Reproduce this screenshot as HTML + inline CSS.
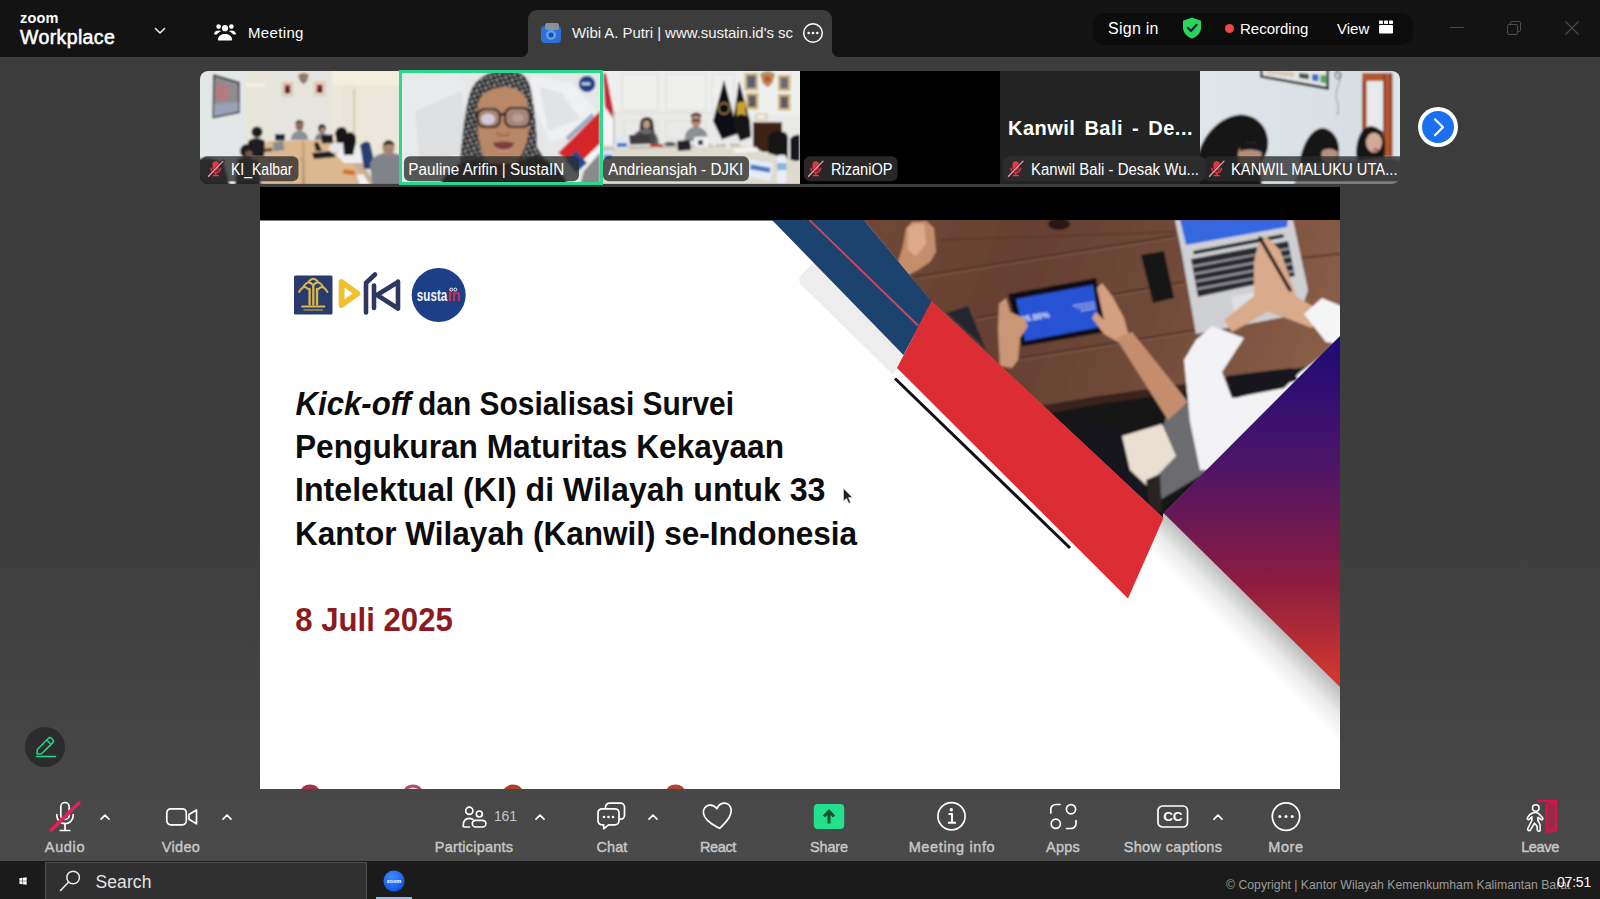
<!DOCTYPE html>
<html lang="id">
<head>
<meta charset="utf-8">
<title>Zoom Workplace - Meeting</title>
<style>
*{box-sizing:border-box;margin:0;padding:0}
html,body{width:1600px;height:899px;overflow:hidden;background:linear-gradient(to bottom,#3c3c3c 0,#3c3c3c 57px,#3d3d3d 520px,#4a4a4a 862px);font-family:"Liberation Sans",sans-serif;color:#fff}
.abs{position:absolute}
#top{left:0;top:0;width:1600px;height:57px;background:#131313}
#tab{left:528px;top:10px;width:304px;height:47px;background:#3c3c3c;border-radius:9px 9px 0 0}
#tab:before,#tab:after{content:"";position:absolute;bottom:0;width:7px;height:7px}
#tab:before{left:-7px;background:radial-gradient(circle at 0 0,transparent 6.500px,#3c3c3c 7.500px)}
#tab:after{right:-7px;background:radial-gradient(circle at 100% 0,transparent 6.500px,#3c3c3c 7.500px)}
#pill{left:1093px;top:13px;width:320px;height:32px;background:#0c0c0c;border-radius:12px}
.t{position:absolute;white-space:nowrap;line-height:1}
#strip{left:200px;top:71px;width:1200px;height:112.500px;border-radius:8px;overflow:hidden;background:#000}
.th{position:absolute;top:0;width:200px;height:112px;overflow:hidden}
.lbl{position:absolute;left:4px;bottom:2px;height:23px;background:rgba(40,40,40,.72);border-radius:6px;font-size:15px;line-height:23px;padding:0 5px 0 4px;white-space:nowrap;color:#fff}
#share{left:260px;top:187px;width:1080px;height:602px;background:#000;overflow:hidden}
#tool{left:0;top:790px;width:1600px;height:71px}
.tb{position:absolute;top:0;height:72px;text-align:center;font-size:14.5px;color:#d9d9d9}
.tb span{position:absolute;left:50%;transform:translateX(-50%);top:49.500px;white-space:nowrap;line-height:1;color:#c8c8c8;-webkit-text-stroke:.4px #c8c8c8}
#task{left:0;top:861px;width:1600px;height:38px;background:#1b1b1b}
#search{left:45px;top:1px;width:322px;height:37px;background:#303030;border:1px solid #505050;border-bottom:0}
</style>
</head>
<body>
<!-- TOP BAR -->
<div id="top" class="abs">
  <div class="t" style="left:20px;top:11px;font-size:14.500px;font-weight:bold;letter-spacing:.2px">zoom</div>
  <div class="t" style="left:20px;top:27.500px;font-size:19.500px;-webkit-text-stroke:.55px #fff;letter-spacing:.38px">Workplace</div>
  <svg class="abs" style="left:153px;top:25px" width="14" height="12" viewBox="0 0 14 12"><path d="M2.5 3.5 L7 8 L11.5 3.5" fill="none" stroke="#e8e8e8" stroke-width="1.6" stroke-linecap="round" stroke-linejoin="round"/></svg>
  <svg class="abs" style="left:214px;top:22px" width="22" height="20" viewBox="0 0 22 20"><g fill="#fff"><circle cx="11" cy="6.2" r="3.1"/><circle cx="4.6" cy="4.6" r="2.3"/><circle cx="17.4" cy="4.6" r="2.3"/><path d="M5.2 18.5c-.9 0-1.5-.7-1.3-1.6.6-3 3.4-5 7.1-5s6.500 2 7.100 5c.2.900-.4 1.600-1.300 1.600z"/><path d="M.8 12.600c-.5 0-.9-.5-.7-1 .6-1.900 2.300-3.100 4.500-3.100 1 0 1.900.2 2.600.7-2.100.7-3.600 1.900-4.400 3.400zM21.200 12.600c.5 0 .9-.5.7-1-.6-1.900-2.300-3.100-4.500-3.100-1 0-1.900.2-2.600.7 2.100.7 3.600 1.900 4.400 3.400z"/></g></svg>
  <div class="t" style="left:248px;top:25px;font-size:15px;letter-spacing:.35px">Meeting</div>
  <div id="tab" class="abs"></div>
  <svg class="abs" style="left:539px;top:21px" width="24" height="24" viewBox="0 0 24 24"><rect x="2" y="5" width="20" height="17" rx="4" fill="#2f6fd6"/><rect x="6" y="2" width="14" height="7" rx="2" fill="#8a8f9a"/><circle cx="12" cy="14" r="5" fill="#5aa0f0"/><circle cx="12" cy="14" r="2.500" fill="#1d4fa8"/></svg>
  <div class="t" style="left:572px;top:25px;font-size:15px;letter-spacing:-.05px;color:#f2f2f2">Wibi A. Putri | www.sustain.id's sc</div>
  <svg class="abs" style="left:802px;top:22px" width="22" height="22" viewBox="0 0 22 22"><circle cx="11" cy="11" r="9.300" fill="none" stroke="#fff" stroke-width="1.500"/><circle cx="6.700" cy="11" r="1.300" fill="#fff"/><circle cx="11" cy="11" r="1.300" fill="#fff"/><circle cx="15.300" cy="11" r="1.300" fill="#fff"/></svg>
  <div id="pill" class="abs"></div>
  <div class="t" style="left:1108px;top:21px;font-size:16px;letter-spacing:.25px">Sign in</div>
  <svg class="abs" style="left:1181px;top:16px" width="22" height="24" viewBox="0 0 22 24"><path d="M11 1.500 L20 4.800 V11.500 C20 16.800 16.300 20.800 11 22.600 C5.700 20.800 2 16.800 2 11.500 V4.800 Z" fill="#2bd45b"/><path d="M6.800 11.800 L10 15 L15.600 8.800" fill="none" stroke="#123" stroke-width="2.200" stroke-linecap="round" stroke-linejoin="round"/></svg>
  <div class="abs" style="left:1225px;top:24px;width:9px;height:9px;border-radius:50%;background:#f0464b"></div>
  <div class="t" style="left:1240px;top:21px;font-size:15px">Recording</div>
  <div class="t" style="left:1337px;top:21px;font-size:15px">View</div>
  <svg class="abs" style="left:1378px;top:20px" width="16" height="14" viewBox="0 0 16 14"><g fill="#fff"><rect x="1" y="0.500" width="4" height="3.500" rx=".8"/><rect x="6" y="0.500" width="4" height="3.500" rx=".8"/><rect x="11" y="0.500" width="4" height="3.500" rx=".8"/><rect x="1" y="5" width="14" height="8.500" rx="1"/></g></svg>
  <div class="abs" style="left:1450px;top:27px;width:14px;height:1px;background:#4c4c4c"></div>
  <svg class="abs" style="left:1506px;top:20px" width="16" height="16" viewBox="0 0 16 16"><rect x="1.500" y="4.500" width="10" height="10" rx="1.500" fill="none" stroke="#4c4c4c" stroke-width="1"/><path d="M4.500 4.500 V3 a1.500 1.500 0 0 1 1.500 -1.500 H13 a1.500 1.500 0 0 1 1.500 1.500 V10 a1.500 1.500 0 0 1 -1.500 1.500 H11.500" fill="none" stroke="#4c4c4c" stroke-width="1"/></svg>
  <svg class="abs" style="left:1564px;top:20px" width="16" height="16" viewBox="0 0 16 16"><path d="M1.500 1.500 L14.500 14.500 M14.500 1.500 L1.500 14.500" stroke="#4c4c4c" stroke-width="1.200"/></svg>
</div>

<!-- THUMBNAIL STRIP -->
<div id="strip" class="abs">
<svg class="abs" style="left:0;top:0" width="1200" height="112.500" viewBox="0 0 1200 112.500" font-family="Liberation Sans, sans-serif">
  <defs>
    <filter id="t1" x="-5%" y="-5%" width="110%" height="110%"><feGaussianBlur stdDeviation="0.8"/></filter>
    <filter id="t2" x="-10%" y="-10%" width="120%" height="120%"><feGaussianBlur stdDeviation="1.600"/></filter>
    <linearGradient id="w1" x1="0" y1="0" x2="1" y2="0"><stop offset="0" stop-color="#e3e5e4"/><stop offset=".45" stop-color="#ebe9e2"/><stop offset="1" stop-color="#f1e7d0"/></linearGradient>
    <linearGradient id="w3" x1="0" y1="0" x2="0" y2="1"><stop offset="0" stop-color="#e4e2de"/><stop offset="1" stop-color="#d2cfc9"/></linearGradient>
    <linearGradient id="w6" x1="0" y1="0" x2="1" y2="0"><stop offset="0" stop-color="#e0e6ea"/><stop offset="1" stop-color="#d6dde2"/></linearGradient>
    <pattern id="hij" width="7" height="6" patternUnits="userSpaceOnUse" patternTransform="rotate(24)"><rect width="7" height="6" fill="#1c1c1e"/><rect x=".5" y=".5" width="2.600" height="1.600" fill="#e4e4e4"/><rect x="4" y="3.300" width="2.400" height="1.500" fill="#cfcfcf"/><rect x="1" y="3.800" width="1.300" height="1.200" fill="#9a9a9a"/></pattern>
    <clipPath id="c1"><rect x="0" y="0" width="200" height="113"/></clipPath>
    <clipPath id="c2"><rect x="200" y="0" width="200" height="113"/></clipPath>
    <clipPath id="c3"><rect x="400" y="0" width="200" height="113"/></clipPath>
    <clipPath id="c6"><rect x="1000" y="0" width="200" height="113"/></clipPath>
    
  </defs>

  <!-- THUMB 1 : KI_Kalbar -->
  <g clip-path="url(#c1)"><g filter="url(#t1)">
    <rect x="-2" y="-2" width="204" height="116" fill="#e7e6e1"/>
    <rect x="-2" y="-2" width="48" height="90" fill="#e4e7e8"/>
    <rect x="45" y="-2" width="29" height="80" fill="#e8e5db"/><rect x="45" y="12" width="20" height="4" fill="#f2eee2"/>
    <rect x="74" y="-2" width="58" height="76" fill="#e5e4df"/>
    <rect x="132" y="-2" width="70" height="90" fill="#ece7da"/><rect x="132" y="-2" width="70" height="16" fill="#f3eddd"/>
    <rect x="142" y="14" width="14" height="70" fill="#e9e4d8"/><rect x="153.500" y="18" width="1.500" height="60" fill="#c9c0a8"/>
    <polygon points="13,3 40,11 40,42 12.500,47.500" fill="#26262a"/><polygon points="14.500,5.500 38.500,12.500 38.500,40.500 14,45.500" fill="#8e8c8e"/><polygon points="16,12 28,15 28,29 16,29" fill="#b87880"/><polygon points="14.200,33 38.500,31 38.500,40.500 14,45.500" fill="#98a2b8"/>
    <rect x="82" y="11" width="11" height="14.500" fill="#d4c4a0"/><rect x="83.500" y="12.500" width="8" height="11.500" fill="#f0eee8"/><rect x="84.500" y="13.500" width="6" height="9" fill="#c03844"/><rect x="85.500" y="16" width="4" height="6.500" fill="#2c2c34"/>
    <rect x="114" y="10.500" width="11.500" height="14.500" fill="#d4c4a0"/><rect x="115.500" y="12" width="8.500" height="11.500" fill="#f0eee8"/><rect x="116.500" y="13" width="6.500" height="9" fill="#c03844"/><rect x="117.800" y="15.500" width="4" height="6.500" fill="#2c2c34"/>
    <path d="M98 4 q5.500 -4 11 0 l-2 6 l-3.500 3.500 l-3.500 -3.500 z" fill="#8a7c68"/>
    <!-- table -->
    <polygon points="68,70 138,69 166,114 52,114 56,86" fill="#dcb890"/>
    <polygon points="102.500,70 104,70 105,114 102,114" fill="#b89468"/>
    <polygon points="66,88 104,87 104,89 66,90" fill="#c4a078"/>
    <polygon points="138,69 150,72 176,114 166,114" fill="#c8b094"/>
    <!-- center back -->
    <rect x="75" y="63" width="10" height="6.500" rx="1" fill="#1e2440"/>
    <ellipse cx="99.500" cy="55" rx="4" ry="5" fill="#8c6a58"/><path d="M95.500 53 q4 -5 8 0 v-2 q-4 -4 -8 0z" fill="#2a2220"/><path d="M90.500 69 q1 -9 9 -9.500 q8 .5 9 9.500z" fill="#8c9096"/>
    <ellipse cx="122" cy="57.500" rx="3.800" ry="4.500" fill="#2c2222"/><ellipse cx="122.500" cy="59" rx="2.300" ry="2.800" fill="#b08a78"/><path d="M114.500 69 q1 -7 7.500 -7.500 q6.500 .5 7.500 7.500z" fill="#7e8288"/>
    <!-- laptops -->
    <polygon points="73,72 83,70 84.500,79 74,80.500" fill="#8a8a90"/><polygon points="121,64 133,63.500 133,72 122,72.500" fill="#1c1c20"/>
    <polygon points="114,72 118,71 122,80 116,80" fill="#1a1a1e"/><polygon points="112,82 132,80 136,86 114,88" fill="#1e1e22"/>
    <polygon points="62,78 72,77 73,80 63,81" fill="#5a3a2c"/>
    <!-- left persons -->
    <ellipse cx="57" cy="61" rx="5.500" ry="5.500" fill="#1a1a1e"/><path d="M48 70 q8 -6 17 0 l-1 16 h-15 z" fill="#1c1c22"/>
    <ellipse cx="47" cy="80" rx="7" ry="7" fill="#1a1a1e"/><ellipse cx="49" cy="83" rx="3.500" ry="3.500" fill="#7a5a4a"/><path d="M37 88 q10 -5 22 2 l2 24 h-26 z" fill="#26262c"/>
    <path d="M-2 88 q12 -4 26 4 l6 22 h-32 z" fill="#2a2a2e"/>
    <!-- right persons -->
    <path d="M128 78 q4 -8 14 -8 l6 8 l-16 4 z" fill="#e6e8ec"/><path d="M135 62 q2 -7 8 -6 q5 2 4 8 l-2 8 h-8 z" fill="#151518"/>
    <path d="M136 84 q6 -12 18 -12 q8 2 8 10 l2 10 h-20 z" fill="#eeeef0"/><path d="M143 70 q1 -9 8 -9 q6 2 5 10 l-3 13 h-9 z" fill="#131316"/>
    <path d="M160 74 q6 -6 10 -2 l6 26 h-12 z" fill="#2a3c70"/>
    <path d="M170 92 q6 -12 22 -10 l10 2 v30 h-30 z" fill="#80848a"/><ellipse cx="188.500" cy="77" rx="6" ry="7" fill="#a88470"/><path d="M182.500 75 q2 -7 8 -5.500 q4 1.500 4 5 q-5 -3 -12 .5z" fill="#1e1a18"/>
    <rect x="143" y="99" width="12" height="4.500" fill="#d8702c" transform="rotate(8 149 101)"/>
    <polygon points="157,104 163,103 170,114 160,114" fill="#f2f2f2"/>
  </g></g>

  <!-- THUMB 2 : Pauline -->
  <g clip-path="url(#c2)"><g filter="url(#t1)">
    <rect x="198" y="-2" width="204" height="116" fill="#e6e7e8"/>
    <polygon points="200,10 260,2 272,40 262,90 200,100" fill="#e9eaeb"/>
    <polygon points="215,40 262,20 266,80 220,96" fill="#dfe0e2"/>
    <polygon points="330,4 372,12 400,44 400,60 350,70 336,40" fill="#eff0f1"/>
    <polygon points="340,16 362,22 380,48 348,60" fill="#e2e3e6"/>
    <polygon points="358,82 400,40 400,73 376,96" fill="#d4262c"/>
    <polygon points="366,66 392,42 394,46 368,70" fill="#9aa8c4"/>
    <polygon points="376,96 400,73 400,80 382,100" fill="#f4f4f4"/>
    <polygon points="384,100 400,82 400,114 380,114" fill="#8a8a8c"/>
    <polygon points="366,90 376,80 387,92 376,102" fill="#1f4a8c"/>
    <circle cx="387" cy="13" r="8.300" fill="#1d3f88"/><rect x="382" y="11.500" width="8" height="2.500" fill="#d0d8ec"/>
    <!-- hijab -->
    <path d="M270 22 C276 4 294 -1 308 -1 C322 -1 330 8 331 20 C335 40 337 62 337 76 L346 90 L352 114 L256 114 L260 90 C262 70 264 40 270 22 Z" fill="url(#hij)"/>
    <!-- face -->
    <path d="M278 34 C280 20 296 15 308 16 C322 17 328 28 329 40 C331 60 326 80 316 92 L288 92 C278 80 276 54 278 34 Z" fill="#b88868"/>
    <path d="M296 60 q8 6 14 0 l-1 6 h-12 z" fill="#a67656"/>
    <path d="M293 72 q10 -3 21 0 q-2 7 -11 7 q-8 0 -10 -7z" fill="#7c3c3a"/><path d="M295 76 q9 5 18 0 q-2 5 -9 5 q-6 0 -9 -5z" fill="#c88c88"/>
    <g fill="#a08478" fill-opacity=".75" stroke="#2a2022" stroke-width="2.200"><rect x="277.500" y="38" width="22.500" height="18" rx="7"/><rect x="305" y="37" width="25" height="19" rx="7"/><path d="M300 44 q2.500 -2 5 0" fill="none"/></g>
    <ellipse cx="288" cy="48" rx="7" ry="5.500" fill="#dcd8f0" opacity=".85"/><ellipse cx="318" cy="47" rx="6" ry="4.500" fill="#c8b8b8" opacity=".5"/>
    <!-- body -->
    <path d="M240 114 q8 -22 34 -26 l14 4 h28 l22 -6 q22 6 30 28 z" fill="#141416"/>
  </g></g>

  <!-- THUMB 3 : Andrieansjah -->
  <g clip-path="url(#c3)"><g filter="url(#t1)">
    <rect x="398" y="-2" width="204" height="116" fill="#efefed"/>
    <rect x="398" y="44" width="204" height="34" fill="#e9e9e7"/>
    <g fill="none" stroke="#dcdcd8" stroke-width="1"><rect x="422" y="3" width="36" height="36"/><rect x="466" y="3" width="40" height="36"/><rect x="424" y="50" width="34" height="20"/><rect x="466" y="50" width="40" height="18"/><rect x="512" y="3" width="22" height="36"/></g>
    <rect x="398" y="41" width="150" height="2.500" fill="#e0e0dc"/>
    <path d="M403 3 L406 2 L413.500 40 L413 47 L405 36 Z" fill="#c42c38"/><path d="M403 36 L413 48 L414 72 L403 74 Z" fill="#f4f4f4"/><rect x="413" y="40" width="2" height="34" fill="#c8c8c4"/>
    <!-- portraits -->
    <rect x="544.500" y="2" width="13.500" height="17.500" fill="#cdb47c"/><rect x="547" y="4.500" width="8.500" height="12.500" fill="#5a6278"/>
    <rect x="578" y="4" width="12.500" height="16" fill="#cdb47c"/><rect x="580.500" y="6.500" width="7.500" height="11" fill="#6a6a74"/>
    <rect x="546" y="22" width="12.500" height="16.500" fill="#cdb47c"/><rect x="548.500" y="24.500" width="7.500" height="11.500" fill="#5c5c66"/>
    <rect x="578" y="23" width="12.500" height="16.500" fill="#cdb47c"/><rect x="580.500" y="25.500" width="7.500" height="11.500" fill="#5c5c66"/>
    <path d="M560 3 q7.500 -6 15 0 l-2.500 9 l-5 4.500 l-5 -4.500 z" fill="#b8925a"/><rect x="564.500" y="5" width="6" height="6" fill="#c8483c"/>
    <rect x="555" y="42" width="12.500" height="7.500" fill="#d8ceb0"/><rect x="557" y="43.500" width="8.500" height="4.500" fill="#f0ece0"/>
    <!-- black flags -->
    <path d="M524 9 L535 50 L540 62 L522 68.500 L513 50 Z" fill="#111113"/>
    <path d="M539 10 L550 50 L551 66 L540 70 L533 52 Z" fill="#131315"/>
    <circle cx="524" cy="37.500" r="5.500" fill="none" stroke="#a88838" stroke-width="1.300"/><path d="M537 32 q6 -3 10 1 l-2 6 l2 6 l-6 -2 l-4 2 z" fill="#c8a030"/>
    <!-- podium & chairs -->
    <rect x="553" y="51" width="29" height="30" fill="#3e2218"/><rect x="553" y="51" width="29" height="2" fill="#5a3424"/>
    <path d="M568 66 q2 -6 10 -6 q9 0 10 6 v22 h-20 z" fill="#161618"/><path d="M590 68 q4 -5 10 -4 v26 h-10 z" fill="#18181a"/>
    <!-- table -->
    <polygon points="398,78 540,74 602,92 602,114 398,114" fill="#dedacd"/>
    <polygon points="398,76 540,72.500 540,75 398,79" fill="#c4beb0"/>
    <!-- woman -->
    <path d="M440 52 q1 -6 7 -6 q6 0 6.500 7 l1 8 h-15 z" fill="#3a3838"/><ellipse cx="446.500" cy="53.500" rx="3.300" ry="4" fill="#c09a84"/>
    <path d="M431 73 q1 -14 15 -15 q12 1 13 15z" fill="#6c6c70"/><path d="M438 60 q8 6 16 0 l2 13 h-19 z" fill="#4a4848"/>
    <polygon points="429,64 449,63.500 450,73 430,73.500" fill="#3a3a40"/>
    <!-- man -->
    <ellipse cx="496" cy="50" rx="5" ry="6.500" fill="#b48a70"/><path d="M491 47 q5 -6 10 0 l.300 -3 q-5 -5 -10.500 0z" fill="#2a2422"/><rect x="492" y="48.500" width="8" height="2" fill="#3a3030"/>
    <path d="M484.500 70 q0 -13 11.500 -14.500 q12 1.500 12 14.500z" fill="#8c8e94"/>
    <polygon points="494,66 508,65.500 508.500,76 494.500,76" fill="#eceef2"/><rect x="498" y="69" width="5" height="5" fill="#3a3a44"/>
    <polygon points="477,70 490,69 491,79 478,80" fill="#24242a"/><ellipse cx="470" cy="73" rx="6" ry="2.200" fill="#5a5a5c"/>
    <!-- items -->
    <rect x="415" y="66" width="13" height="12" fill="#dfe8f4"/><rect x="417" y="72" width="10" height="4" fill="#4a78c8"/>
    <rect x="450" y="73" width="13" height="3" fill="#c03c30"/>
    <rect x="403" y="79" width="10" height="13" fill="#d4e0f0"/><rect x="404" y="84" width="8" height="4" fill="#4a78c8"/>
    <rect x="548" y="90" width="24" height="18" fill="#e6ecf6" transform="rotate(10 560 99)"/><rect x="550" y="95" width="20" height="5" fill="#4878c4" transform="rotate(10 560 99)"/>
    <rect x="577" y="84" width="9.500" height="28" rx="3" fill="#e8eef4"/><rect x="577" y="92" width="9.500" height="7" fill="#8cb4dc"/>
    <rect x="512" y="65" width="4" height="10" rx="1.500" fill="#e4eaf0"/><rect x="526" y="68" width="4" height="10" rx="1.500" fill="#e4eaf0"/>
    <polygon points="532,78 556,76 560,80 536,82" fill="#f4f4f4"/>
  </g></g>

  <!-- THUMB 4 -->
  <rect x="600" y="0" width="200" height="113" fill="#000"/>
  <!-- THUMB 5 -->
  <rect x="800" y="0" width="200" height="113" fill="#232323"/>
  <text x="808" y="63.500" font-size="20" font-weight="bold" fill="#fff" word-spacing="3" textLength="184.500" lengthAdjust="spacing">Kanwil Bali - De...</text>

  <!-- THUMB 6 : Maluku -->
  <g clip-path="url(#c6)"><g filter="url(#t1)">
    <rect x="998" y="-2" width="204" height="116" fill="url(#w6)"/>
    <polygon points="1060,-2 1129,-2 1129,19 1060,6.500" fill="#1a1a1c"/><polygon points="1062.500,-2 1126.500,-2 1126.500,15.800 1062.500,4.500" fill="#e6e8e6"/>
    <polygon points="1099,2 1109,3 1109,8.500 1099,7" fill="#3a5a44"/><polygon points="1112,3 1118.500,3.500 1118.500,10.500 1112,9.500" fill="#3a6ac4"/><polygon points="1120.500,4 1126.500,4.500 1126.500,12.500 1120.500,11.500" fill="#58a058"/><polygon points="1066,-1 1094,1 1094,6 1066,3" fill="#d8c8b8"/>
    <path d="M1136 0 q6 6 3 12 q-5 10 -1 22 q1 6 -1 10" fill="none" stroke="#9a9ea4" stroke-width="1.200"/><ellipse cx="1138" cy="4" rx="3" ry="4" fill="none" stroke="#4a4a50" stroke-width="1"/>
    <!-- door -->
    <rect x="1162" y="2" width="31" height="86" fill="#e6eaec"/>
    <rect x="1162" y="2" width="4.500" height="58" fill="#9c4824"/><rect x="1162" y="2" width="24" height="8" fill="#b4562a"/><rect x="1183" y="2" width="9.500" height="84" fill="#9a4422"/><rect x="1186" y="2" width="3" height="84" fill="#b85a30"/>
    <rect x="1193" y="-2" width="9" height="116" fill="#dfe5ea"/>
    <!-- people -->
    <path d="M998 84 C1004 62 1020 46 1040 43.500 C1056 44 1066 54 1068 68 C1069 78 1066 86 1060 92 L1062 114 L998 114 Z" fill="#121214"/>
    <path d="M1040 76 C1048 68 1060 70 1062 80 C1062 90 1056 98 1046 98 C1038 94 1036 84 1040 76 Z" fill="#b48e7a"/>
    <path d="M1040 74 q10 -6 22 0 q2 4 1 8 q-10 -6 -23 -2z" fill="#19191b"/>
    <path d="M1100 88 C1104 70 1112 58 1122 57 C1134 58 1140 70 1139 82 L1138 92 L1100 94 Z" fill="#151517"/>
    <path d="M1122 80 q8 -5 16 1 q0 8 -6 11 h-8 q-4 -6 -2 -12z" fill="#b8927e"/>
    <path d="M1156 84 C1156 66 1162 56 1171 55 C1180 56 1185 64 1185 76 L1184 88 L1158 90 Z" fill="#131315"/>
    <ellipse cx="1174" cy="71.500" rx="8" ry="10" fill="#d4aa98"/><ellipse cx="1175.500" cy="78.500" rx="2.800" ry="1.300" fill="#a84c50"/><path d="M1165 66 q8 -8 17 -1 l1 -4 q-9 -8 -18 0z" fill="#131315"/>
    <path d="M1094 114 q4 -20 26 -22 q20 -4 40 -2 q24 -6 42 0 v26 z" fill="#7e7e80"/>
  </g></g>

  <!-- LABELS -->
  <g font-size="15.600" fill="#fff">
    <rect x="1" y="85.300" width="97.500" height="25" rx="6" fill="#2b2b2b" opacity=".78"/>
    <g transform="translate(7.500 89.300)">
      <path d="M1 16 L15.500 0.800" stroke="#2a2a2a" stroke-width="3.400" stroke-linecap="round"/>
      <g fill="#e2364e" stroke="none"><rect x="5" y="1" width="6.400" height="9.500" rx="3.200"/><path d="M2.600 7.500 h1.500 a4.100 4.100 0 0 0 8.200 0 h1.500 a5.600 5.600 0 0 1 -4.800 5.500 v1.500 h2.300 v1.500 h-6.200 v-1.500 h2.300 v-1.500 a5.600 5.600 0 0 1 -4.800 -5.500z"/></g>
      <path d="M1 16 L15.500 0.800" stroke="#2a2a2a" stroke-width="2.600" stroke-linecap="round" opacity=".55"/>
      <path d="M1 16 L15.500 0.800" stroke="#f49aa6" stroke-width="1.300" stroke-linecap="round"/>
    </g>
    <text x="31" y="103.500" textLength="61.500" lengthAdjust="spacingAndGlyphs">KI_Kalbar</text>
    <rect x="204" y="85.300" width="175" height="25" rx="6" fill="#2b2b2b" opacity=".78"/>
    <text x="208.300" y="103.500" textLength="156" lengthAdjust="spacingAndGlyphs">Pauline Arifin | SustaIN</text>
    <rect x="403" y="85.300" width="146" height="25" rx="6" fill="#2b2b2b" opacity=".78"/>
    <text x="408.300" y="103.500" textLength="135" lengthAdjust="spacingAndGlyphs">Andrieansjah - DJKI</text>
    <rect x="604" y="85.300" width="93.500" height="25" rx="6" fill="#2b2b2b" opacity=".9"/>
    <g transform="translate(607.500 89.300)">
      <path d="M1 16 L15.500 0.800" stroke="#2a2a2a" stroke-width="3.400" stroke-linecap="round"/>
      <g fill="#e2364e" stroke="none"><rect x="5" y="1" width="6.400" height="9.500" rx="3.200"/><path d="M2.600 7.500 h1.500 a4.100 4.100 0 0 0 8.200 0 h1.500 a5.600 5.600 0 0 1 -4.800 5.500 v1.500 h2.300 v1.500 h-6.200 v-1.500 h2.300 v-1.500 a5.600 5.600 0 0 1 -4.800 -5.500z"/></g>
      <path d="M1 16 L15.500 0.800" stroke="#2a2a2a" stroke-width="2.600" stroke-linecap="round" opacity=".55"/>
      <path d="M1 16 L15.500 0.800" stroke="#f49aa6" stroke-width="1.300" stroke-linecap="round"/>
    </g>
    <text x="631" y="103.500" textLength="61.500" lengthAdjust="spacingAndGlyphs">RizaniOP</text>
    <rect x="803" y="85.300" width="203" height="25" rx="6" fill="#2d2d2d" opacity=".9"/>
    <g transform="translate(807.500 89.300)">
      <path d="M1 16 L15.500 0.800" stroke="#2a2a2a" stroke-width="3.400" stroke-linecap="round"/>
      <g fill="#e2364e" stroke="none"><rect x="5" y="1" width="6.400" height="9.500" rx="3.200"/><path d="M2.600 7.500 h1.500 a4.100 4.100 0 0 0 8.200 0 h1.500 a5.600 5.600 0 0 1 -4.800 5.500 v1.500 h2.300 v1.500 h-6.200 v-1.500 h2.300 v-1.500 a5.600 5.600 0 0 1 -4.800 -5.500z"/></g>
      <path d="M1 16 L15.500 0.800" stroke="#2a2a2a" stroke-width="2.600" stroke-linecap="round" opacity=".55"/>
      <path d="M1 16 L15.500 0.800" stroke="#f49aa6" stroke-width="1.300" stroke-linecap="round"/>
    </g>
    <text x="831" y="103.500" textLength="168" lengthAdjust="spacingAndGlyphs">Kanwil Bali - Desak Wu...</text>
    <rect x="1004" y="85.300" width="203" height="25" rx="6" fill="#2b2b2b" opacity=".78"/>
    <g transform="translate(1008.500 89.300)">
      <path d="M1 16 L15.500 0.800" stroke="#2a2a2a" stroke-width="3.400" stroke-linecap="round"/>
      <g fill="#e2364e" stroke="none"><rect x="5" y="1" width="6.400" height="9.500" rx="3.200"/><path d="M2.600 7.500 h1.500 a4.100 4.100 0 0 0 8.200 0 h1.500 a5.600 5.600 0 0 1 -4.800 5.500 v1.500 h2.300 v1.500 h-6.200 v-1.500 h2.300 v-1.500 a5.600 5.600 0 0 1 -4.800 -5.500z"/></g>
      <path d="M1 16 L15.500 0.800" stroke="#2a2a2a" stroke-width="2.600" stroke-linecap="round" opacity=".55"/>
      <path d="M1 16 L15.500 0.800" stroke="#f49aa6" stroke-width="1.300" stroke-linecap="round"/>
    </g>
    <text x="1031" y="103.500" textLength="166.500" lengthAdjust="spacingAndGlyphs">KANWIL MALUKU UTA...</text>
  </g>
</svg>
</div>

<div class="abs" style="left:398.500px;top:70px;width:204px;height:115px;border:3px solid #2bd88d"></div>

<!-- SHARED SCREEN -->
<div id="share" class="abs">
<svg class="abs" style="left:0;top:0" width="1080" height="602" viewBox="260 187 1080 602" font-family="Liberation Sans, sans-serif">
  <defs>
    <linearGradient id="pg" x1="0" y1="0" x2="0" y2="1"><stop offset="0" stop-color="#1c0a78"/><stop offset=".35" stop-color="#4a1468"/><stop offset=".7" stop-color="#8c1c40"/><stop offset="1" stop-color="#d63a2c"/></linearGradient>
    <linearGradient id="wood" x1="0" y1="0" x2="1" y2=".25"><stop offset="0" stop-color="#704836"/><stop offset=".35" stop-color="#664032"/><stop offset=".6" stop-color="#6e4838"/><stop offset="1" stop-color="#8a5e48"/></linearGradient>
    <linearGradient id="shg" gradientUnits="userSpaceOnUse" x1="1250" y1="598" x2="1222" y2="626"><stop offset="0" stop-color="#000" stop-opacity=".26"/><stop offset=".5" stop-color="#000" stop-opacity=".08"/><stop offset="1" stop-color="#000" stop-opacity="0"/></linearGradient>
    <filter id="b1" x="-5%" y="-5%" width="110%" height="110%"><feGaussianBlur stdDeviation="0.9"/></filter>
    <filter id="b2" x="-20%" y="-20%" width="140%" height="140%"><feGaussianBlur stdDeviation="2"/></filter>
    <filter id="b8" x="-30%" y="-30%" width="160%" height="160%"><feGaussianBlur stdDeviation="9"/></filter>
    <clipPath id="pc"><polygon points="864,220 1341,220 1341,336 1163,514 1163,518 931,301"/></clipPath>
    <clipPath id="sc"><rect x="260" y="220" width="1080" height="569"/></clipPath>
  </defs>
  <rect x="260" y="187" width="1080" height="34" fill="#000"/>
  <rect x="260" y="220.500" width="1080" height="568.500" fill="#fff"/>
  <g clip-path="url(#sc)">
    <!-- soft shadows -->
    <polygon points="1163.500,511 1343,688 1343,752 1131,543" fill="url(#shg)"/>
    <path d="M814 262 L903.500 355 L897.500 368 L893 374.500 L801.500 285 Q797 280 801.500 275 Z" fill="#ededee"/>
    <!-- navy band -->
    <polygon points="772,220 864,220 932,301.500 903.500,355" fill="#1c426e"/>
    <line x1="809.500" y1="220" x2="918" y2="325.500" stroke="#d8425c" stroke-width="1.800"/>
    <!-- photo -->
    <g clip-path="url(#pc)">
      <g filter="url(#b1)">
        <rect x="860" y="215" width="490" height="310" fill="url(#wood)"/>
        <g stroke="#3e261c" stroke-width="1.300" opacity=".8">
          <line x1="914" y1="277" x2="1174" y2="236"/><line x1="976" y1="318" x2="1184" y2="282"/><line x1="1020" y1="358" x2="1196" y2="330"/><line x1="1300" y1="258" x2="1345" y2="253"/><line x1="940" y1="240" x2="1176" y2="232" opacity=".5"/>
        </g>
        <g stroke="#a07860" stroke-width="1" opacity=".5">
          <line x1="914" y1="279" x2="1174" y2="238"/><line x1="976" y1="320" x2="1184" y2="284"/><line x1="1020" y1="360" x2="1196" y2="332"/>
        </g>
        <!-- under-table dark -->
        <polygon points="1040,406 1100,396 1300,368 1345,360 1345,530 1100,530" fill="#141418"/>
        <polygon points="1040,406 1100,396 1230,378 1230,386 1100,404 1046,414" fill="#3a241a"/>
        <polygon points="1168,410 1200,400 1210,470 1160,500 1150,470" fill="#6c6c70"/>
        <!-- notebook left -->
        <polygon points="946,313 968,306 986,350 976,340" fill="#23262e"/>
        <!-- hand top-left -->
        <path d="M898 262 L903 246 L906 228 L912 222 L926 221 L934 228 L936 252 L930 262 L918 270 L906 276 Z" fill="#c48e6c"/>
        <path d="M908 228 L914 224 L924 224 L926 244 L916 256 L908 250 Z" fill="#dcaa8a"/>
        <ellipse cx="1059" cy="224" rx="11" ry="6" fill="#2a1812"/>
        <!-- tablet -->
        <polygon points="1008,294 1096,278 1106.500,332 1022,346.500" fill="#111115"/>
        <polygon points="1016,299 1093,285 1100,327 1025,341" fill="#2852d4"/>
        <text x="1021.500" y="322.500" font-size="8.500" font-weight="bold" fill="#e8eefc" transform="rotate(-10 1021 322)">85.00%</text>
        <g stroke="#c8d4f4" stroke-width="1" transform="rotate(-10 1084 306)"><line x1="1073" y1="304" x2="1095" y2="304"/><line x1="1076" y1="307" x2="1095" y2="307"/><line x1="1080" y1="310" x2="1095" y2="310"/></g>
        <!-- left arm / hand -->
        <path d="M999 304 L1006 298 L1010 312 L1024 318 L1028 326 L1020 338 L1018 360 L1012 368 L1000 366 L998 330 Z" fill="#c99676"/>
        <!-- right hand on tablet -->
        <path d="M1097 288 L1102 283 L1112 296 L1124 318 L1130 340 L1118 342 L1104 334 L1092 318 L1096 312 L1104 320 Z" fill="#d3a080"/>
        <!-- forearm -->
        <polygon points="1116,338 1132,332 1188,402 1168,420" fill="#c48e6e"/>
        <!-- phone -->
        <polygon points="1141,255 1164,251 1174,298 1153,303" fill="#141418"/>
        <!-- laptop -->
        <polygon points="1175,220 1293,220 1308,290 1300,314 1196,334 1182,254" fill="#cfd0d4"/>
        <polygon points="1180,220 1288,220 1287,227 1186,245" fill="#3468e0"/>
        <polygon points="1193,251 1283,234 1284,237.500 1194,254.500" fill="#1a1a1e"/>
        <polygon points="1191,259 1288,241 1295,276 1198,297" fill="#2c2c30"/>
        <g stroke="#b8b9be" stroke-width="1.300"><line x1="1192.500" y1="266.500" x2="1289.500" y2="248.500"/><line x1="1194" y1="274" x2="1291" y2="256"/><line x1="1195.500" y1="281.500" x2="1292.500" y2="263.500"/><line x1="1197" y1="289" x2="1294" y2="271"/></g>
        <polygon points="1231,297 1260,291 1264,308 1235,315" fill="#dfe0e3"/>
        <!-- hands w/ pen -->
        <path d="M1254 262 L1258 244 L1266 236 L1280 250 L1290 278 L1296 296 L1322 312 L1312 328 L1286 318 L1268 312 L1232 332 L1224 320 L1254 296 Z" fill="#d9aa8c"/>
        <line x1="1260" y1="238" x2="1290" y2="290" stroke="#1a1212" stroke-width="3.400" stroke-linecap="round"/>
        <!-- white shirt -->
        <path d="M1184 360 L1196 340 L1212 326 L1244 338 L1222 372 L1232 398 L1284 388 L1300 372 L1345 340 L1345 470 L1200 470 L1190 422 Z" fill="#f3f2f5"/>
        <polygon points="1304,314 1322,298 1341,306 1345,345 1326,342" fill="#f5f4f7"/>
        <polygon points="1226,376 1292,368 1298,380 1236,398" fill="#16161c"/>
        <!-- bottom person -->
        <polygon points="1075,420 1122,430 1140,482 1150,505 1100,505" fill="#17171c"/>
        <polygon points="1122,436 1162,424 1176,456 1147,486 1130,470" fill="#e9dfd2"/>
        <polygon points="1146,480 1160,474 1162,512 1150,512" fill="#2a2420"/>
      </g>
    </g>
    <!-- red band -->
    <polygon points="931.500,301 1163.500,518 1128,598.500 897,368" fill="#dc2c34"/>
    <!-- black line -->
    <line x1="895" y1="378.500" x2="1070" y2="548" stroke="#111" stroke-width="3"/>
    <!-- purple triangle -->
    <polygon points="1341,335 1163.500,513 1341,688" fill="url(#pg)"/>
  </g>
  <!-- logos -->
  <rect x="294" y="275.500" width="38.500" height="39" rx="1.500" fill="#2b3a6c"/>
  <g fill="none" stroke="#d9b84e" stroke-width="2" stroke-linecap="round">
    <path d="M299 292 q4.500 -8 9 -3 M327.500 292 q-4.500 -8 -9 -3 M303.500 286.500 q4.500 -7 9 -2 M323 286.500 q-4.500 -7 -9 -2 M308.500 282 q4.800 -6.500 9.500 0"/>
    <path d="M309.600 289 V304.500 M313.300 285 V304.500 M317 289 V304.500" stroke-width="2.300"/>
    <path d="M302 306.500 H324.500" stroke-width="1.800"/><path d="M304 310 H322.500" stroke-width="1.200"/>
  </g>
  <path d="M341.600 282 L357.500 293.500 L341.600 305 Z" fill="none" stroke="#f0c02e" stroke-width="5.800" stroke-linejoin="round"/>
  <g fill="none" stroke="#2d3760" stroke-width="4.600" stroke-linecap="round" stroke-linejoin="round">
    <path d="M366 312.500 V283 L375 274.500"/>
    <path d="M374 285.500 V308"/>
    <path d="M398 282 L377 295 L398 308.500 V281.500"/>
  </g>
  <circle cx="438.700" cy="295" r="27" fill="#1d3f88"/>
  <text x="416.800" y="300.600" font-size="16.500" font-weight="bold" fill="#f1f3f8" textLength="30.500" lengthAdjust="spacingAndGlyphs">susta</text>
  <text x="447.500" y="300.600" font-size="16.500" font-weight="bold" fill="#c9304a" textLength="13" lengthAdjust="spacingAndGlyphs">in</text>
  <g fill="none" stroke="#f1f3f8" stroke-width="1"><circle cx="451.300" cy="289.600" r="1.500"/><circle cx="455.300" cy="289.600" r="1.500"/></g>
  <!-- title -->
  <g font-weight="bold" font-size="33.400" fill="#0c0c0c">
    <text x="295.500" y="415.200" font-style="italic" textLength="115.500" lengthAdjust="spacingAndGlyphs">Kick-off</text>
    <text x="418" y="415.200" textLength="316" lengthAdjust="spacingAndGlyphs">dan Sosialisasi Survei</text>
    <text x="295" y="458.200" textLength="489" lengthAdjust="spacingAndGlyphs">Pengukuran Maturitas Kekayaan</text>
    <text x="295" y="501.200" textLength="530.500" lengthAdjust="spacingAndGlyphs">Intelektual (KI) di Wilayah untuk 33</text>
    <text x="295" y="544.800" textLength="562" lengthAdjust="spacingAndGlyphs">Kantor Wilayah (Kanwil) se-Indonesia</text>
    <text x="295.300" y="630.600" fill="#8d1a20" textLength="157.500" lengthAdjust="spacingAndGlyphs">8 Juli 2025</text>
  </g>
  <!-- cursor -->
  <path d="M843.500 488.500 V501 L846.500 498.300 L848.800 503.300 L850.600 502.500 L848.400 497.600 L852.300 497.300 Z" fill="#222" stroke="#ddd" stroke-width=".6"/>
  <!-- peeking circles -->
  <g clip-path="url(#sc)">
    <circle cx="310" cy="795.500" r="11" fill="#a8324c"/>
    <circle cx="413" cy="795.500" r="11" fill="#b24a6c"/><circle cx="413" cy="795.500" r="8" fill="#f1dfe6"/>
    <circle cx="513" cy="795.500" r="11" fill="#b03e2c"/>
    <circle cx="675.500" cy="795.500" r="11" fill="#b24232"/>
  </g>
</svg>
</div>

<!-- FLOATING -->
<div class="abs" style="left:25px;top:727px;width:40px;height:40px;border-radius:50%;background:#2c2c2f"></div>
<svg class="abs" style="left:25px;top:727px" width="40" height="40" viewBox="0 0 40 40"><g fill="none" stroke="#24d982" stroke-width="1.500" stroke-linejoin="round" stroke-linecap="round"><path d="M12 27 L12.300 22.500 L23.500 11.300 a2 2 0 0 1 2.800 0 L27.800 12.800 a2 2 0 0 1 0 2.800 L16.600 26.800 Z"/><path d="M21.800 13 L26.100 17.300"/><path d="M11.500 29.600 H30.500"/></g></svg>
<div class="abs" style="left:1418px;top:107px;width:40px;height:40px;border-radius:50%;background:#fff"></div>
<div class="abs" style="left:1422px;top:111px;width:32px;height:32px;border-radius:50%;background:#1b6ff2"></div>
<svg class="abs" style="left:1422px;top:111px" width="32" height="32" viewBox="0 0 32 32"><path d="M13 8.300 L21 16.200 L13 24.200" fill="none" stroke="#fff" stroke-width="2.200" stroke-linecap="round" stroke-linejoin="round"/></svg>
<!-- TOOLBAR -->
<div id="tool" class="abs">
  <!-- Audio -->
  <svg class="abs" style="left:47px;top:8px" width="36" height="36" viewBox="0 0 36 36"><g fill="none" stroke="#fff" stroke-width="1.700" stroke-linecap="round"><rect x="13.800" y="4.500" width="8.400" height="17" rx="4.200"/><path d="M9.800 16.500 v1 a8.200 8.200 0 0 0 16.400 0 v-1"/><path d="M18 26 V32.200 M13.300 32.500 H22.700"/></g><path d="M4.500 31.800 L31.800 5" stroke="#e2205c" stroke-width="3.800" stroke-linecap="round"/></svg>
  <svg class="abs chev" style="left:99px;top:22px" width="12" height="10" viewBox="0 0 12 10"><path d="M2 7.200 L6 3.200 L10 7.200" fill="none" stroke="#fff" stroke-width="1.700" stroke-linecap="round" stroke-linejoin="round"/></svg>
  <div class="tb" style="left:65px"><span style="letter-spacing:0.64px">Audio</span></div>
  <!-- Video -->
  <svg class="abs" style="left:164px;top:16px" width="36" height="22" viewBox="0 0 36 22"><g fill="none" stroke="#fff" stroke-width="1.700" stroke-linejoin="round"><rect x="2.800" y="2.800" width="19.500" height="16" rx="4"/><path d="M25 8.500 L32.500 4 V17.800 L25 13.300 Z"/></g></svg>
  <svg class="abs chev" style="left:221px;top:22px" width="12" height="10" viewBox="0 0 12 10"><path d="M2 7.200 L6 3.200 L10 7.200" fill="none" stroke="#fff" stroke-width="1.700" stroke-linecap="round" stroke-linejoin="round"/></svg>
  <div class="tb" style="left:181px"><span style="letter-spacing:0.29px">Video</span></div>
  <!-- Participants -->
  <svg class="abs" style="left:460px;top:14px" width="28" height="26" viewBox="0 0 28 26"><g fill="none" stroke="#fff" stroke-width="1.700"><circle cx="9.300" cy="6.800" r="3.600"/><circle cx="19.300" cy="10" r="3"/><path d="M3.200 22 c-.3-4.800 2.300-7.600 6.100-7.600 2 0 3.500.7 4.500 1.900"/><rect x="12.300" y="16.300" width="13.600" height="6.700" rx="3.350"/><path d="M3.200 22 c0 .6.400 1 1 1 h6"/></g></svg>
  <div class="t" style="left:494px;top:19px;font-size:14px;color:#c4c4c4;letter-spacing:-.2px">161</div>
  <svg class="abs chev" style="left:534px;top:22px" width="12" height="10" viewBox="0 0 12 10"><path d="M2 7.200 L6 3.200 L10 7.200" fill="none" stroke="#fff" stroke-width="1.700" stroke-linecap="round" stroke-linejoin="round"/></svg>
  <div class="tb" style="left:474px"><span style="letter-spacing:0.23px">Participants</span></div>
  <!-- Chat -->
  <svg class="abs" style="left:595px;top:11px" width="32" height="32" viewBox="0 0 32 32"><g fill="none" stroke="#fff" stroke-width="1.700" stroke-linejoin="round" stroke-linecap="round"><path d="M10.500 7 v-.8 a4 4 0 0 1 4 -4 h11 a4 4 0 0 1 4 4 v8 a4 4 0 0 1 -4 4 h-1"/><path d="M7 7.800 h13 a4 4 0 0 1 4 4 v8 a4 4 0 0 1 -4 4 h-6.500 l-4.800 4 v-4 h-1.700 a4 4 0 0 1 -4 -4 v-8 a4 4 0 0 1 4 -4 z"/></g><g fill="#fff"><circle cx="9" cy="16" r="1.300"/><circle cx="13.500" cy="16" r="1.300"/><circle cx="18" cy="16" r="1.300"/></g></svg>
  <svg class="abs chev" style="left:647px;top:22px" width="12" height="10" viewBox="0 0 12 10"><path d="M2 7.200 L6 3.200 L10 7.200" fill="none" stroke="#fff" stroke-width="1.700" stroke-linecap="round" stroke-linejoin="round"/></svg>
  <div class="tb" style="left:612px"><span style="letter-spacing:0.04px">Chat</span></div>
  <!-- React -->
  <svg class="abs" style="left:701px;top:11px" width="34" height="30" viewBox="0 0 34 30"><path d="M17 27.500 C13 24.500 3 18.500 3 10.300 C3 5.800 6.300 3 9.800 3 C13 3 15.500 5 17 7.600 C18.500 5 21 3 24.200 3 C27.700 3 31 5.800 31 10.300 C31 18.500 21 24.500 17 27.500 Z" fill="none" stroke="#fff" stroke-width="1.700" stroke-linejoin="round" transform="rotate(-8 17 15)"/></svg>
  <div class="tb" style="left:718px"><span style="letter-spacing:-0.36px">React</span></div>
  <!-- Share -->
  <svg class="abs" style="left:813px;top:13px" width="32" height="27" viewBox="0 0 32 27"><rect x=".8" y="1" width="30.400" height="25" rx="4" fill="#22e08c"/><path d="M16 20.500 V9.500 M11 13.500 L16 8.200 L21 13.500" fill="none" stroke="#14502f" stroke-width="3" stroke-linejoin="miter"/></svg>
  <div class="tb" style="left:829px"><span style="letter-spacing:-0.18px">Share</span></div>
  <!-- Meeting info -->
  <svg class="abs" style="left:935px;top:10px" width="32" height="32" viewBox="0 0 32 32"><circle cx="16.500" cy="16.200" r="13.600" fill="none" stroke="#fff" stroke-width="1.700"/><circle cx="16.300" cy="9.800" r="1.700" fill="#fff"/><path d="M13.500 14 H17 V22.500 M13 22.800 H21" fill="none" stroke="#fff" stroke-width="2"/></svg>
  <div class="tb" style="left:952px"><span style="letter-spacing:0.64px">Meeting info</span></div>
  <!-- Apps -->
  <svg class="abs" style="left:1048px;top:11px" width="32" height="32" viewBox="0 0 32 32"><g fill="none" stroke="#fff" stroke-width="1.700" stroke-linecap="round"><path d="M2.800 12 V8.500 a5 5 0 0 1 5 -5 H12"/><path d="M28 19.500 V22.500 a5 5 0 0 1 -5 5 H18.500"/><circle cx="23" cy="8.200" r="4.600"/><circle cx="7.800" cy="22.800" r="4.600"/></g></svg>
  <div class="tb" style="left:1063px"><span style="letter-spacing:0.23px">Apps</span></div>
  <!-- Captions -->
  <svg class="abs" style="left:1155px;top:13px" width="36" height="27" viewBox="0 0 36 27"><rect x="3" y="3" width="29.500" height="21" rx="4.500" fill="none" stroke="#fff" stroke-width="1.700"/><text x="17.800" y="18.300" text-anchor="middle" font-family="Liberation Sans, sans-serif" font-weight="bold" font-size="13.500" fill="#fff" letter-spacing="-.3">CC</text></svg>
  <svg class="abs chev" style="left:1212px;top:22px" width="12" height="10" viewBox="0 0 12 10"><path d="M2 7.200 L6 3.200 L10 7.200" fill="none" stroke="#fff" stroke-width="1.700" stroke-linecap="round" stroke-linejoin="round"/></svg>
  <div class="tb" style="left:1173px"><span style="letter-spacing:0.34px">Show captions</span></div>
  <!-- More -->
  <svg class="abs" style="left:1270px;top:10px" width="32" height="32" viewBox="0 0 32 32"><circle cx="16" cy="16.600" r="13.700" fill="none" stroke="#fff" stroke-width="1.700"/><g fill="#fff"><circle cx="9.800" cy="16.600" r="1.500"/><circle cx="16" cy="16.600" r="1.500"/><circle cx="22.200" cy="16.600" r="1.500"/></g></svg>
  <div class="tb" style="left:1286px"><span style="letter-spacing:0.56px">More</span></div>
  <!-- Leave -->
  <svg class="abs" style="left:1522px;top:8px" width="38" height="36" viewBox="0 0 38 36"><path d="M15.500 3.200 H34 V32.500 L24.500 34 V7 L33.500 3.500" fill="none" stroke="#d8134f" stroke-width="2.200" stroke-linejoin="round"/><path d="M24.500 7 L33.800 3.400 V32.400 L24.500 34 Z" fill="#d8134f" opacity=".55"/><g fill="#474747" stroke="#fff" stroke-width="1.600" stroke-linejoin="round"><circle cx="13.800" cy="10" r="3.300"/><path d="M11.500 14.800 C9 15.500 6.500 17.500 5.300 20 C4.800 21.200 6.300 22.200 7.200 21.300 L10 18.800 L9.800 22.500 L5.800 30.500 C5 32.300 7.500 33.500 8.500 31.800 L12.500 25.200 L15 28 L15.300 32 C15.500 33.800 18.300 33.700 18.300 31.800 L18 26.500 L15.800 22.200 L16 19.300 L19 21.500 C20.300 22.300 21.500 20.600 20.500 19.600 L16.300 15.300 C15 14.300 13 14.400 11.500 14.800 Z"/></g></svg>
  <div class="tb" style="left:1540px"><span style="letter-spacing:-0.36px">Leave</span></div>
</div>

<!-- TASKBAR -->
<div id="task" class="abs">
  <svg class="abs" style="left:18.500px;top:15.500px" width="8" height="8" viewBox="0 0 12 12"><g fill="#fff"><path d="M.5 2 L5.300 1.300 V5.700 H.5Z"/><path d="M6 1.200 L11.500 .4 V5.700 H6Z"/><path d="M.5 6.400 H5.300 V10.800 L.5 10.100Z"/><path d="M6 6.400 H11.500 V11.700 L6 10.900Z"/></g></svg>
  <div id="search" class="abs"></div>
  <svg class="abs" style="left:58px;top:6px" width="26" height="26" viewBox="0 0 26 26"><circle cx="15.100" cy="10.500" r="6.300" fill="none" stroke="#ececec" stroke-width="1.500"/><path d="M10.700 15 L2.500 23.500" stroke="#ececec" stroke-width="1.600" stroke-linecap="round"/></svg>
  <div class="t" style="left:95.500px;top:13px;font-size:17.500px;color:#e4e4e4;letter-spacing:.1px">Search</div>
  <svg class="abs" style="left:382px;top:8px" width="24" height="24" viewBox="0 0 24 24"><defs><radialGradient id="zg" cx=".4" cy=".3" r=".8"><stop offset="0" stop-color="#3b8bff"/><stop offset="1" stop-color="#0b4fe0"/></radialGradient></defs><circle cx="12" cy="12" r="10.500" fill="url(#zg)"/><text x="12" y="13.600" text-anchor="middle" font-family="Liberation Sans, sans-serif" font-weight="bold" font-size="5.500" fill="#fff">zoom</text></svg>
  <div class="abs" style="left:376px;top:36px;width:36px;height:2px;background:#8fb8ec"></div>
  <div class="t" style="left:1226px;top:18px;font-size:12.250px;color:#9b9b9b">© Copyright | Kantor Wilayah Kemenkumham Kalimantan Barat</div>
  <div class="t" style="left:1557px;top:14px;font-size:14px;color:#fff;letter-spacing:-.2px">07:51</div>
</div>
</body>
</html>
